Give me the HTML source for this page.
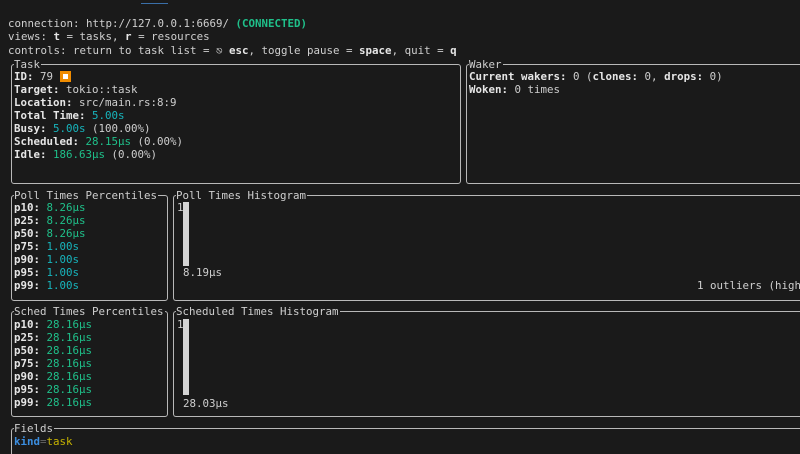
<!DOCTYPE html>
<html><head><meta charset="utf-8"><style>
html,body{margin:0;padding:0;width:800px;height:454px;overflow:hidden;background:#1a1a1a;}
body{font-family:"DejaVu Sans Mono","Liberation Mono",monospace;font-size:10.8px;color:#cfcfcf;position:relative;}
.l{position:absolute;white-space:pre;line-height:13px;}
b{color:#e6e6e6;font-weight:bold;}
.g{color:#1fc08a;}
.c{color:#17b5bd;}
.box{position:absolute;border:1px solid #b8b8b8;border-radius:3px;}
.open{border-right:none;border-top-right-radius:0;border-bottom-right-radius:0;}
.t{position:absolute;top:-7px;left:2px;background:#1a1a1a;line-height:13px;white-space:pre;padding-right:1px;}
.bar{position:absolute;background:#d4d4d4;width:6px;}
</style></head><body>
<div style="position:absolute;left:141px;top:3px;width:27px;height:1px;background:#3a6fa8"></div>
<div class="l" style="left:8px;top:17px">connection: http://127.0.0.1:6669/ <b class="g">(CONNECTED)</b></div>
<div class="l" style="left:8px;top:30px">views: <b>t</b> = tasks, <b>r</b> = resources</div>
<div class="l" style="left:8px;top:44px">controls: return to task list = ⎋ <b>esc</b>, toggle pause = <b>space</b>, quit = <b>q</b></div>

<div class="box" style="left:11px;top:64px;width:448px;height:118px"><div class="t">Task</div></div>
<div class="l" style="left:14px;top:70px"><b>ID:</b> 79 <span style="display:inline-block;width:11px;height:11px;background:#f08c00;vertical-align:-2px;position:relative"><span style="position:absolute;left:3px;top:3px;width:5px;height:5px;background:#fff"></span></span></div>
<div class="l" style="left:14px;top:83px"><b>Target:</b> tokio::task</div>
<div class="l" style="left:14px;top:96px"><b>Location:</b> src/main.rs:8:9</div>
<div class="l" style="left:14px;top:109px"><b>Total Time:</b> <span class="c">5.00s</span></div>
<div class="l" style="left:14px;top:122px"><b>Busy:</b> <span class="c">5.00s</span> (100.00%)</div>
<div class="l" style="left:14px;top:135px"><b>Scheduled:</b> <span class="g">28.15µs</span> (0.00%)</div>
<div class="l" style="left:14px;top:148px"><b>Idle:</b> <span class="g">186.63µs</span> (0.00%)</div>

<div class="box open" style="left:466px;top:64px;width:340px;height:118px"><div class="t">Waker</div></div>
<div class="l" style="left:469px;top:70px"><b>Current wakers:</b> 0 (<b>clones:</b> 0, <b>drops:</b> 0)</div>
<div class="l" style="left:469px;top:83px"><b>Woken:</b> 0 times</div>

<div class="box" style="left:11px;top:195px;width:155px;height:104px"><div class="t">Poll Times Percentiles</div></div>
<div class="l" style="left:14px;top:201px"><b>p10:</b> <span class="g">8.26µs</span>
<b>p25:</b> <span class="g">8.26µs</span>
<b>p50:</b> <span class="g">8.26µs</span>
<b>p75:</b> <span class="c">1.00s</span>
<b>p90:</b> <span class="c">1.00s</span>
<b>p95:</b> <span class="c">1.00s</span>
<b>p99:</b> <span class="c">1.00s</span></div>

<div class="box open" style="left:173px;top:195px;width:640px;height:104px"><div class="t">Poll Times Histogram</div></div>
<div class="l" style="left:177px;top:201px">1</div>
<div class="bar" style="left:183px;top:202px;height:64px"></div>
<div class="l" style="left:183px;top:266px">8.19µs</div>
<div class="l" style="left:697px;top:279px">1 outliers (high</div>

<div class="box" style="left:11px;top:311px;width:155px;height:104px"><div class="t">Sched Times Percentiles</div></div>
<div class="l" style="left:14px;top:318px"><b>p10:</b> <span class="g">28.16µs</span>
<b>p25:</b> <span class="g">28.16µs</span>
<b>p50:</b> <span class="g">28.16µs</span>
<b>p75:</b> <span class="g">28.16µs</span>
<b>p90:</b> <span class="g">28.16µs</span>
<b>p95:</b> <span class="g">28.16µs</span>
<b>p99:</b> <span class="g">28.16µs</span></div>

<div class="box open" style="left:173px;top:311px;width:640px;height:104px"><div class="t">Scheduled Times Histogram</div></div>
<div class="l" style="left:177px;top:318px">1</div>
<div class="bar" style="left:183px;top:319px;height:76px"></div>
<div class="l" style="left:183px;top:397px">28.03µs</div>

<div class="box open" style="left:11px;top:428px;width:800px;height:40px"><div class="t">Fields</div></div>
<div class="l" style="left:14px;top:435px"><b style="color:#3b8ee0">kind</b><span style="color:#666">=</span><span style="color:#c8b400">task</span></div>
</body></html>
